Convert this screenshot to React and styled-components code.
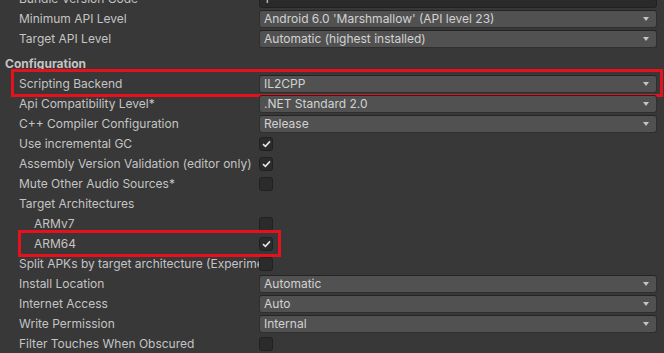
import React from "react"
import styled, { createGlobalStyle } from "styled-components"

const GlobalStyle = createGlobalStyle`
  html, body {
    margin: 0;
    background: #383838;
    overflow: hidden;
  }
  body {
    font-family: Inter, "Noto Sans", sans-serif;
    font-size: 12px;
    color: #c4c4c4;
  }
`

const Panel = styled.div`
  margin-top: -11px;
  padding: 0 7px 0 19px;
`

const Row = styled.div`
  position: relative;
  display: grid;
  grid-template-columns: 240px 1fr;
  align-items: center;
  height: 20px;

  ${p => p.$mark && `
    &::after {
      content: "";
      position: absolute;
      top: ${p.$mark.top}px;
      bottom: ${p.$mark.bottom}px;
      left: ${p.$mark.left}px;
      right: ${p.$mark.right}px;
      border: 3px solid #e5121d;
      pointer-events: none;
    }
  `}
`

const Label = styled.div`
  white-space: nowrap;
  overflow: hidden;
  padding-left: ${p => (p.$sub ? 15 : 0)}px;
  line-height: 20px;
`

const Header = styled.div`
  height: 20px;
  line-height: 20px;
  margin: 5px 0 0 -14px;
  font-weight: 700;
`

const Dropdown = styled.div`
  position: relative;
  height: 16px;
  line-height: 16px;
  padding: 0 20px 0 4px;
  background: #515151;
  border: 1px solid #2f2f2f;
  border-top-color: #242424;
  border-radius: 3px;
  color: #d2d2d2;
  white-space: nowrap;
  overflow: hidden;

  &::after {
    content: "";
    position: absolute;
    right: 7px;
    top: 6px;
    border-left: 3.5px solid transparent;
    border-right: 3.5px solid transparent;
    border-top: 4px solid #c4c4c4;
  }
`

const Field = styled.div`
  height: 16px;
  line-height: 16px;
  padding: 0 4px;
  background: #2a2a2a;
  border: 1px solid #212121;
  border-radius: 3px;
  color: #d2d2d2;
`

const Box = styled.div`
  width: 12px;
  height: 12px;
  background: #2b2b2b;
  border: 1px solid #202020;
  border-radius: 3px;
  display: flex;
  align-items: center;
  justify-content: center;
`

const Check = ({ on }) => (
  <Box>
    {on && (
      <svg width="9" height="8" viewBox="0 0 9 8">
        <path d="M1 4.2 L3.4 6.4 L8 1.4" fill="none" stroke="#e4e4e4" strokeWidth="1.6" />
      </svg>
    )}
  </Box>
)

const rows = [
  { label: "Minimum API Level", drop: "Android 6.0 'Marshmallow' (API level 23)" },
  { label: "Target API Level", drop: "Automatic (highest installed)" },
]

const config = [
  { label: "Scripting Backend", drop: "IL2CPP", mark: { top: -5, bottom: -3, left: -8, right: -6 } },
  { label: "Api Compatibility Level*", drop: ".NET Standard 2.0" },
  { label: "C++ Compiler Configuration", drop: "Release" },
  { label: "Use incremental GC", check: true },
  { label: "Assembly Version Validation (editor only)", check: true },
  { label: "Mute Other Audio Sources*", check: false },
  { label: "Target Architectures" },
  { label: "ARMv7", sub: true, check: false },
  { label: "ARM64", sub: true, check: true, mark: { top: -4, bottom: -3, left: -1, right: 376 } },
  { label: "Split APKs by target architecture (Experimental)", check: false },
  { label: "Install Location", drop: "Automatic" },
  { label: "Internet Access", drop: "Auto" },
  { label: "Write Permission", drop: "Internal" },
  { label: "Filter Touches When Obscured", check: false },
]

const Item = ({ r }) => (
  <Row $mark={r.mark}>
    <Label $sub={r.sub}>{r.label}</Label>
    {r.drop !== undefined && <Dropdown>{r.drop}</Dropdown>}
    {r.check !== undefined && <Check on={r.check} />}
  </Row>
)

export default function App() {
  return (
    <>
      <GlobalStyle />
      <Panel>
        <Row>
          <Label>Bundle Version Code</Label>
          <Field>1</Field>
        </Row>
        {rows.map(r => <Item key={r.label} r={r} />)}
        <Header>Configuration</Header>
        {config.map(r => <Item key={r.label} r={r} />)}
      </Panel>
    </>
  )
}
